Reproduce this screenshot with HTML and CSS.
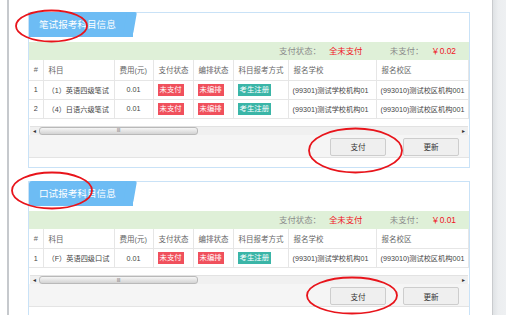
FILE: index.html
```html
<!DOCTYPE html>
<html lang="zh-CN">
<head>
<meta charset="utf-8">
<title>报考科目信息</title>
<link rel="stylesheet" href="styles.css">
</head>
<body>
<div class="frame">
  <div class="edge-left"></div>
  <main class="content">
    <section class="panel">
      <div class="tab">笔试报考科目信息</div>
      <div class="summary">
        <span class="lbl">支付状态：</span><span class="val">全未支付</span>
        <span class="lbl gap">未支付：</span><span class="val">￥0.02</span>
      </div>
      <div class="grid-wrap">
        <table class="grid">
          <colgroup>
            <col class="c1"><col class="c2"><col class="c3"><col class="c4"><col class="c5"><col class="c6"><col class="c7"><col class="c8">
          </colgroup>
          <thead>
            <tr><th class="ctr">#</th><th>科目</th><th>费用(元)</th><th>支付状态</th><th>编排状态</th><th>科目报考方式</th><th>报名学校</th><th>报名校区</th></tr>
          </thead>
          <tbody>
            <tr><td class="ctr">1</td><td>（1）英语四级笔试</td><td class="ctr">0.01</td><td><span class="badge red">未支付</span></td><td><span class="badge red">未编排</span></td><td><span class="badge teal">考生注册</span></td><td>(99301)测试学校机构01</td><td>(993010)测试校区机构001</td></tr>
            <tr><td class="ctr">2</td><td>（4）日语六级笔试</td><td class="ctr">0.01</td><td><span class="badge red">未支付</span></td><td><span class="badge red">未编排</span></td><td><span class="badge teal">考生注册</span></td><td>(99301)测试学校机构01</td><td>(993010)测试校区机构001</td></tr>
          </tbody>
        </table>
      </div>
      <div class="hscroll">
        <span class="arrow">◂</span>
        <div class="thumb"><span class="grip">III</span></div>
        <span class="spacer"></span>
        <span class="arrow">▸</span>
      </div>
      <div class="toolbar">
        <button class="btn">支付</button>
        <button class="btn">更新</button>
      </div>
    </section>

    <section class="panel">
      <div class="tab">口试报考科目信息</div>
      <div class="summary">
        <span class="lbl">支付状态：</span><span class="val">全未支付</span>
        <span class="lbl gap">未支付：</span><span class="val">￥0.01</span>
      </div>
      <div class="grid-wrap">
        <table class="grid">
          <colgroup>
            <col class="c1"><col class="c2"><col class="c3"><col class="c4"><col class="c5"><col class="c6"><col class="c7"><col class="c8">
          </colgroup>
          <thead>
            <tr><th class="ctr">#</th><th>科目</th><th>费用(元)</th><th>支付状态</th><th>编排状态</th><th>科目报考方式</th><th>报名学校</th><th>报名校区</th></tr>
          </thead>
          <tbody>
            <tr><td class="ctr">1</td><td>（F）英语四级口试</td><td class="ctr">0.01</td><td><span class="badge red">未支付</span></td><td><span class="badge red">未编排</span></td><td><span class="badge teal">考生注册</span></td><td>(99301)测试学校机构01</td><td>(993010)测试校区机构001</td></tr>
          </tbody>
        </table>
      </div>
      <div class="hscroll">
        <span class="arrow">◂</span>
        <div class="thumb"><span class="grip">III</span></div>
        <span class="spacer"></span>
        <span class="arrow">▸</span>
      </div>
      <div class="toolbar">
        <button class="btn">支付</button>
        <button class="btn">更新</button>
      </div>
    </section>
  </main>
  <div class="edge-right"></div>
</div>
<svg class="marks" width="506" height="325" viewBox="0 0 506 325" aria-hidden="true">
  <ellipse cx="51.5" cy="26" rx="35.5" ry="15.5"/>
  <ellipse cx="355.5" cy="150.5" rx="46.5" ry="22"/>
  <ellipse cx="52" cy="190.5" rx="40" ry="18"/>
  <ellipse cx="352" cy="295.5" rx="45" ry="18"/>
</svg>
</body>
</html>
```
FILE: styles.css
```css
* { box-sizing: border-box; }
html, body {
  margin: 0;
  padding: 0;
  background: #fff;
}
body {
  width: 506px;
  height: 325px;
  overflow: hidden;
  position: relative;
  font-family: "Liberation Sans", "Noto Sans CJK SC", sans-serif;
  color: #444;
}
.frame {
  display: flex;
  height: 315px;
  overflow: hidden;
}
.edge-left {
  width: 9px;
  flex: none;
  border-right: 2px solid #c6c9cd;
  background: #fff;
}
.edge-right {
  width: 14px;
  flex: none;
  border-left: 1px solid #c9cbce;
  background: linear-gradient(to right, #dfe2e5, #eceef0 40%, #eef0f2);
}
.content {
  flex: 1;
  padding: 12px 0 0 19px;
}
.panel {
  width: 442px;
  border: 1px solid #c9e2f7;
  padding-bottom: 9px;
  margin-bottom: 13px;
  background: #fff;
}
.tab {
  position: relative;
  margin-top: -1px;
  width: 104px;
  height: 25px;
  line-height: 25px;
  padding-left: 10px;
  font-size: 9.6px;
  color: #fff;
  background: #6dbcf4;
  border-radius: 3px 0 0 0;
}
.tab::after {
  content: "";
  position: absolute;
  top: 0;
  right: -4px;
  width: 10px;
  height: 25px;
  background: #6dbcf4;
  transform: skewX(-10deg);
  transform-origin: top left;
  border-radius: 0 2px 5px 0;
}
.summary {
  margin-top: 5px;
  height: 18px;
  line-height: 18px;
  background: #dff0d8;
  text-align: right;
  padding-right: 13px;
  font-size: 8.4px;
  white-space: nowrap;
}
.summary .lbl { color: #8a8a8a; }
.summary .val { color: #f0141e; margin-left: 8px; }
.summary .gap { margin-left: 25px; }
.grid-wrap {
  width: 440px;
  overflow: hidden;
  padding-bottom: 7px;
}
.grid {
  border-collapse: collapse;
  table-layout: fixed;
  width: 439px;
  font-size: 7.5px;
}
.c1 { width: 14px; }
.c2 { width: 71px; }
.c3 { width: 39px; }
.c4 { width: 40px; }
.c5 { width: 40px; }
.c6 { width: 55px; }
.c7 { width: 88px; }
.c8 { width: 92px; }
.grid th, .grid td {
  border: 1px solid #e6e6e6;
  border-top: none;
  padding: 0 0 0 5px;
  text-align: left;
  white-space: nowrap;
  overflow: hidden;
}
.grid tr > :first-child { border-left: none; }
.grid th {
  height: 20px;
  font-weight: normal;
  color: #666;
}
.grid td {
  height: 19px;
  color: #444;
  font-size: 7.2px;
  padding-left: 4px;
}
.grid .ctr { text-align: center; padding: 0; }
.badge {
  display: inline-block;
  height: 12px;
  line-height: 12px;
  padding: 0 2px;
  color: #fff;
  font-size: 7.4px;
  vertical-align: middle;
}
.badge.red { background: #f0505c; }
.badge.teal { background: #3ab5a7; }
.hscroll {
  display: flex;
  align-items: center;
  height: 9px;
  margin: 0 1px;
  background: #f0f0f0;
  border-top: 1px solid #e2e2e2;
}
.hscroll .arrow {
  width: 9px;
  font-size: 6px;
  line-height: 8px;
  text-align: center;
  color: #333;
}
.hscroll .thumb {
  width: 159px;
  height: 8px;
  border: 1px solid #b9b9b9;
  border-radius: 3px;
  background: linear-gradient(#f6f6f6, #d3d3d3);
  display: flex;
  align-items: center;
  justify-content: center;
}
.hscroll .grip {
  font-size: 5px;
  line-height: 5px;
  color: #777;
  letter-spacing: -0.3px;
}
.hscroll .spacer { flex: 1; }
.toolbar {
  display: flex;
  justify-content: flex-end;
  gap: 17px;
  height: 23px;
  padding: 3px 10px 0 0;
  background: #f5f5f5;
  border-bottom: 1px solid #e4e4e4;
}
.btn {
  width: 56px;
  height: 18px;
  margin: 0;
  padding: 0;
  border: 1px solid #cdcdcd;
  border-radius: 2px;
  background: #efefef;
  color: #333;
  font-family: "Liberation Sans", "Noto Sans CJK SC", sans-serif;
  font-size: 7.6px;
}
.marks {
  position: absolute;
  left: 0;
  top: 0;
  pointer-events: none;
}
.marks ellipse {
  fill: none;
  stroke: #e8141b;
  stroke-width: 1.8;
}
```
